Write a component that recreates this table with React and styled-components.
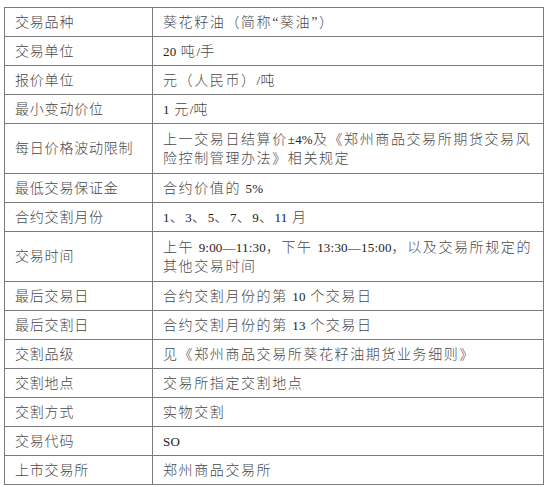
import React from 'react';
import styled, { createGlobalStyle } from 'styled-components';

const GlobalStyle = createGlobalStyle`
    body {
        margin: 0;
        background: #fff;
    }
`;

const rows = [
    ['交易品种', '葵花籽油（简称“葵油”）'],
    ['交易单位', '20 吨/手'],
    ['报价单位', '元（人民币）/吨'],
    ['最小变动价位', '1 元/吨'],
    ['每日价格波动限制', ['上一交易日结算价±4%及《郑州商品交易所期货交易风', '险控制管理办法》相关规定']],
    ['最低交易保证金', '合约价值的 5%'],
    ['合约交割月份', '1、3、5、7、9、11 月'],
    ['交易时间', ['上午 9:00—11:30，下午 13:30—15:00，以及交易所规定的', '其他交易时间']],
    ['最后交易日', '合约交割月份的第 10 个交易日'],
    ['最后交割日', '合约交割月份的第 13 个交易日'],
    ['交割品级', '见《郑州商品交易所葵花籽油期货业务细则》'],
    ['交割地点', '交易所指定交割地点'],
    ['交割方式', '实物交割'],
    ['交易代码', 'SO'],
    ['上市交易所', '郑州商品交易所'],
];

// latin runs (numbers, codes) are set tighter than the spaced-out Chinese text
const splitLatin = (text) =>
    text.split(/([\x20-\x7E±—]+)/).filter(Boolean).map((part, i) =>
        /^[\x20-\x7E±—]+$/.test(part) ? <Latin key={i}>{part}</Latin> : part
    );

const App = () => {
    return (
        <>
            <GlobalStyle />
            <Table>
                <colgroup>
                    <col style={{width: 148}} />
                    <col style={{width: 391}} />
                </colgroup>
                <tbody>
                    {rows.map(([label, value]) => {
                        const tall = Array.isArray(value);
                        const lines = tall ? value : [value];
                        return (
                            <Row key={label} tall={tall ? 1 : 0}>
                                <Label>{label}</Label>
                                <Value>
                                    {lines.map((line, i) => <Line key={i}>{splitLatin(line)}</Line>)}
                                </Value>
                            </Row>
                        );
                    })}
                </tbody>
            </Table>
        </>
    );
}

export default App;

const Table = styled.table`
    margin: 7px 0 0 4px;
    width: 540px;
    border-collapse: collapse;
    table-layout: fixed;
    border: 1px solid #666;
    font-family: "Liberation Serif", "Noto Sans CJK SC", serif;
    font-size: 14px;
    font-weight: 300;
    color: #484848;
`;
const Row = styled.tr`
    height: ${p => (p.tall ? '50px' : '29px')};
`;
const Cell = styled.td`
    border: 1px solid #7a7a7a;
    padding: 0 0 0 10px;
    vertical-align: middle;
    line-height: 19px;
    white-space: nowrap;
`;
const Label = styled(Cell)`
    letter-spacing: 0.8px;
`;
const Value = styled(Cell)`
    letter-spacing: 1.6px;
`;
const Line = styled.div``;
const Latin = styled.span`
    font-size: 13px;
    letter-spacing: 0.2px;
    word-spacing: 1px;
    color: #222;
`;
